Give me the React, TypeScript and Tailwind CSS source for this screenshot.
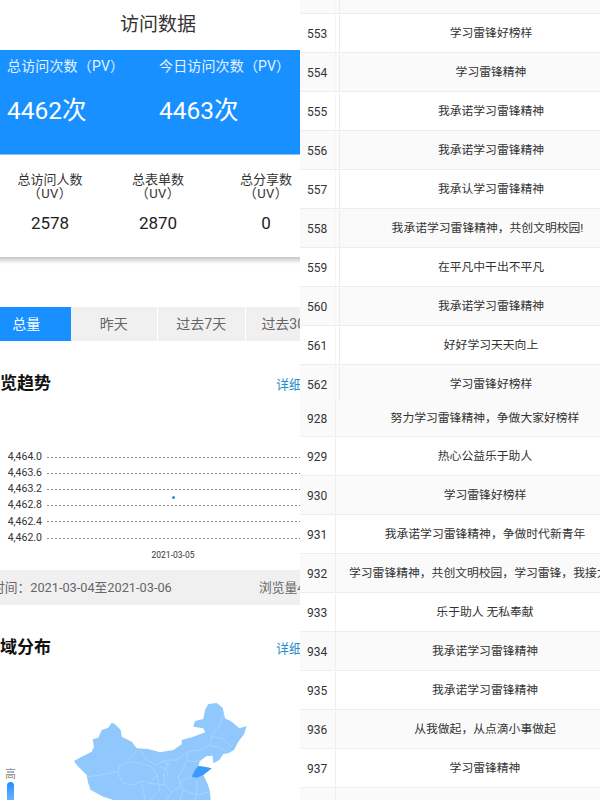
const font = { fontFamily: 'Roboto, "Noto Sans CJK SC", sans-serif' };

function Row({ n, text, gray, wide, shift, h = "h-[39px]", double }: { n: number; text: string; gray: boolean; wide?: boolean; shift?: boolean; h?: string; double?: boolean }) {
  return (
    <div className={`flex ${h} shrink-0 border-b border-[#eeeeee] pt-[1px] text-[12px] text-[#333333] ${gray ? "bg-[#fafafa]" : "bg-white"}`}>
      <div className={`flex w-[36px] shrink-0 items-center pl-[7px] border-r ${double ? "border-[#f6f6f6]" : "border-[#efefef]"}`}>{n}</div>
      {double && <div className="w-[4px] shrink-0 border-r border-[#ececec]" />}
      <div className={`flex ${double ? "w-[302px]" : "w-[298px]"} shrink-0 items-center overflow-hidden whitespace-nowrap text-[11.8px] ${wide ? "pl-[13px]" : "justify-center"} ${shift ? "pr-[7px]" : ""}`}>
        <span className="shrink-0">{text}</span>
      </div>
    </div>
  );
}

const t1 = ["学习雷锋好榜样", "学习雷锋精神", "我承诺学习雷锋精神", "我承诺学习雷锋精神", "我承认学习雷锋精神", "我承诺学习雷锋精神，共创文明校园!", "在平凡中干出不平凡", "我承诺学习雷锋精神", "好好学习天天向上", "学习雷锋好榜样"];
const t2 = ["努力学习雷锋精神，争做大家好榜样", "热心公益乐于助人", "学习雷锋好榜样", "我承诺学习雷锋精神，争做时代新青年", "学习雷锋精神，共创文明校园，学习雷锋，我接力", "乐于助人 无私奉献", "我承诺学习雷锋精神", "我承诺学习雷锋精神", "从我做起，从点滴小事做起", "学习雷锋精神"];

function Stat({ label, value }: { label: string; value: string }) {
  return (
    <div className="flex flex-col items-center">
      <div className="text-[13px] leading-[14px] text-[#333333]">{label}</div>
      <div className="text-[13px] leading-[14px] tracking-[0.5px] text-[#333333]">（UV）</div>
      <div className="mt-[12px] text-[17px] leading-[20px] text-[#222222]">{value}</div>
    </div>
  );
}

function Heading({ title }: { title: string }) {
  return (
    <div className="flex items-center justify-between pr-[4px]">
      <div className="ml-[-1px] text-[17px] font-bold leading-[24px] text-[#111111]">{title}</div>
      <div className="pt-[3px] text-[13px] leading-[18px] text-[#2a8fd0]">详细数据</div>
    </div>
  );
}

function GridLine({ label }: { label: string }) {
  return (
    <div className="flex h-[16.2px] items-center">
      <div className="w-[58px] shrink-0 text-right text-[10.5px] leading-none text-[#333333]">{label}</div>
      <div className="ml-[5px] h-px flex-1 bg-[repeating-linear-gradient(90deg,#8a8a8a_0,#8a8a8a_2px,transparent_2px,transparent_4px)]" />
    </div>
  );
}

function ChinaMap() {
  return (
    <svg viewBox="60 690 200 110" className="ml-[76px] block h-[110px] w-[200px]">
      <path
        fill="#90c8fd"
        d="M74 761 L81.7 756.7 L91.7 751.7 L94 746.7 L92.7 739.3 L98.3 737.7 L101.7 730 L108.3 727.7 L111.7 722.7 L115 724.3 L120.7 730 L121.7 736.7 L131.7 741.7 L136.7 748.3 L148.3 749 L160 752.3 L173.3 750 L181.7 744.3 L181.7 740 L193.3 736.7 L205 732.3 L203.3 728.3 L193.3 726.7 L195 721 L203.3 719 L205 710 L208.3 704 L216.7 703 L222.7 707.7 L225 718.3 L231.7 721.7 L239.3 728.3 L246.7 726 L244 734.3 L238.3 741.7 L234 750 L228.3 753.3 L223.3 754 L219.3 760 L213.3 763.3 L212.7 755.7 L206.7 756 L200 761 L198.3 766 L204 766.7 L211.7 768.3 L208.3 771 L203.3 775 L205 778.3 L208 785 L210 791.7 L210.7 800 L113.3 800 L103.3 796.7 L90.7 790 L88.3 783.3 L86.7 775 L76.7 765 Z"
      />
      <path
        fill="none"
        stroke="#bcdcfd"
        strokeWidth="0.5"
        d="M88 776.7 L100 775 L118.3 771.7 M118.3 771.7 L120 765 L130 761.7 L140 763.3 L151.7 766.7 L157.3 775 L150 783.3 L141.7 781 L133.3 785 L123.3 783.3 L118.3 775 L118.3 771.7 M136.7 750 L128.3 760 M140 750 L145 758.3 L155 765 L163.3 761.7 L170 765 M160 761.7 L170 760 L176.7 760 L188.3 751.7 L200 750 L210 745 L211.7 735 L220 725 L223.3 713 M211.7 736.7 L221.7 738.3 L231.7 746.7 M210 745 L221.7 748.3 L228.3 753.3 M188.3 751.7 L186.7 760 L183.3 768.3 L178.3 776.7 M191.7 776.7 L180 781.7 L183.3 790 L196.7 795 L210 791.7 M196.7 778.3 L196.7 795 M178.3 776.7 L180 787 L171.7 791.7 L166.7 800 M168.3 761.7 L163.3 775 L165 785 L171.7 791.7 M160 766.7 L168.3 770 L166.7 776.7 L163.3 775 M200 761 L191.7 761.7 L186.7 760 M157.3 775 L160 790 L150 800 M150 783.3 L165 785 M141.7 781 L145 800 M183.3 790 L180 800 M196.7 795 L195 800"
      />
      <path fill="#3a9bfa" d="M191.7 776.7 L195 770 L198.3 766 L204 766.7 L211.7 768.3 L208.3 771 L203.3 775 L196.7 777.7 Z" />
    </svg>
  );
}

export default function App() {
  return (
    <div className="flex h-[800px] w-[600px] overflow-hidden bg-white" style={font}>
      <div className="h-[800px] w-[300px] shrink-0 overflow-hidden">
        <div className="ml-[-16px] w-[348px]">
          <div className="flex h-[50px] items-center justify-center text-[19px] text-[#333333]">访问数据</div>
          <div className="flex h-[105px] border-b border-[#8fc8fb] bg-[#1890ff] pl-[23px] pt-[6px] text-white">
            <div className="w-[152px]">
              <div className="text-[14px] leading-[20px] tracking-[0.15px] text-[#e6f3ff]">总访问次数（PV）</div>
              <div className="mt-[19px] text-[24.5px] leading-[32px]">4462次</div>
            </div>
            <div>
              <div className="text-[14px] leading-[20px] tracking-[0.15px] text-[#e6f3ff]">今日访问次数（PV）</div>
              <div className="mt-[19px] text-[24.5px] leading-[32px]">4463次</div>
            </div>
          </div>
          <div className="grid h-[102px] grid-cols-3 bg-white px-[12px] pt-[18px] shadow-[0_3px_5px_rgba(0,0,0,0.25)]">
            <Stat label="总访问人数" value="2578" />
            <Stat label="总表单数" value="2870" />
            <Stat label="总分享数" value="0" />
          </div>
          <div className="mt-[50px] flex h-[34px] text-[14px] text-[#666666]">
            <div className="flex w-[87px] items-center justify-center bg-[#1890ff] pr-[2px] text-white">总量</div>
            <div className="flex w-[88px] items-center justify-center border-r border-white bg-[#f0f0f0]">昨天</div>
            <div className="flex w-[88px] items-center justify-center border-r border-white bg-[#f0f0f0]">过去7天</div>
            <div className="flex w-[87px] items-center justify-center bg-[#f0f0f0] pl-[3px]">过去30天</div>
          </div>
          <div className="mt-[30px]"><Heading title="浏览趋势" /></div>
          <div className="relative mt-[54px] flex flex-col">
            <GridLine label="4,464.0" />
            <GridLine label="4,463.6" />
            <GridLine label="4,463.2" />
            <GridLine label="4,462.8" />
            <GridLine label="4,462.4" />
            <GridLine label="4,462.0" />
            <div className="absolute left-[188px] top-[47px] h-[3px] w-[3px] rounded-full bg-[#2a8fd0]" />
          </div>
          <div className="ml-[189px] mt-[4px] w-0 whitespace-nowrap text-[8.5px] leading-[10px] text-[#333333]">
            <span className="inline-block -translate-x-1/2">2021-03-05</span>
          </div>
          <div className="mt-[10px] flex h-[35px] items-center justify-between bg-[#f0f0f0] pl-[8px] text-[12.75px] text-[#666666]">
            <div>时间：2021-03-04至2021-03-06</div>
            <div className="w-[73px] whitespace-nowrap">浏览量4462</div>
          </div>
          <div className="mt-[30px]"><Heading title="地域分布" /></div>
          <div className="relative mt-[31px]">
            <ChinaMap />
            <div className="absolute left-[21px] top-[78px] flex flex-col items-center">
              <div className="text-[11px] leading-[13px] text-[#888888]">高</div>
              <div className="mt-[1px] h-[30px] w-[7px] rounded-t-full bg-gradient-to-b from-[#1890ff] to-[#90c8fd]" />
            </div>
          </div>
        </div>
      </div>
      <div className="flex h-[800px] w-[300px] shrink-0 flex-col overflow-hidden">
        <div className="h-[400px] shrink-0 overflow-hidden">
          <div className="flex h-[14px] border-b border-[#eeeeee] bg-[#fafafa]">
            <div className="w-[36px] border-r border-[#f6f6f6]" />
            <div className="w-[4px] border-r border-[#ececec]" />
          </div>
          {t1.map((t, i) => (
            <Row key={i} n={553 + i} text={t} gray={i % 2 === 1} double shift={i === 5} />
          ))}
        </div>
        <div className="min-h-0 flex-1 overflow-hidden">
          {t2.map((t, i) => (
            <Row key={i} n={928 + i} text={t} gray={i % 2 === 0} h={i === 0 ? "h-[37px]" : "h-[39px]"} wide={i === 4} />
          ))}
          <div className="flex h-[14px] bg-[#fafafa]"><div className="w-[36px] border-r border-[#efefef]" /></div>
        </div>
      </div>
    </div>
  );
}
